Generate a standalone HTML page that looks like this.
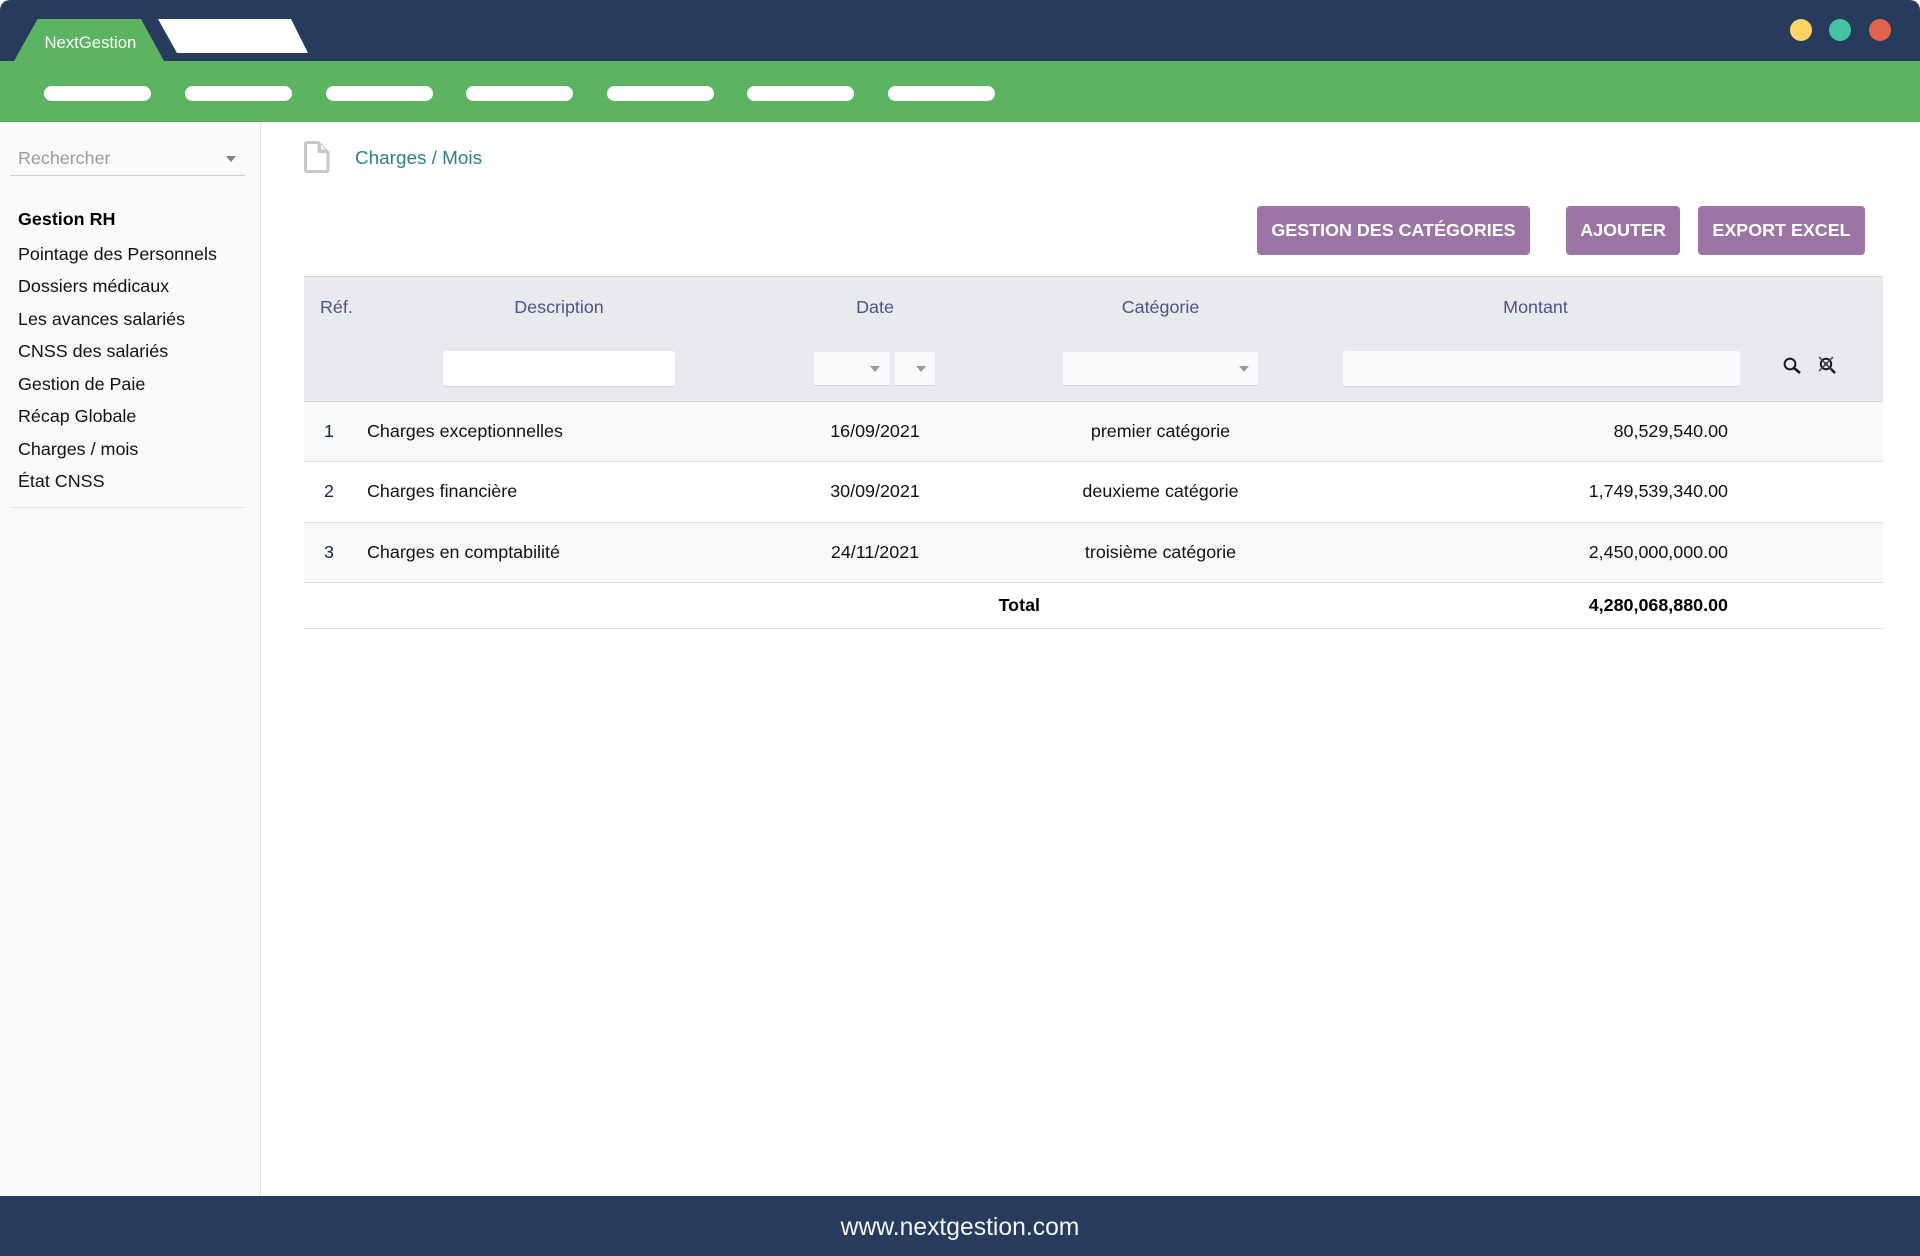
<!DOCTYPE html>
<html lang="fr">
<head>
<meta charset="utf-8">
<title>NextGestion</title>
<style>
html,body{margin:0;padding:0;width:1920px;height:1256px;overflow:hidden;background:#fff;font-family:"Liberation Sans",Arial,sans-serif;}
.a{position:absolute;}
.t{position:absolute;white-space:nowrap;line-height:24px;height:24px;font-size:17.9px;}
.c{transform:translateX(-50%);}
.r{transform:translateX(-100%);}
.pill{position:absolute;top:86px;height:15px;border-radius:8px;background:#fff;width:107px;}
.btn{position:absolute;top:206px;height:49px;line-height:48px;background:#9c75a4;color:#fff;font-weight:bold;font-size:17.9px;text-align:center;border-radius:4px;white-space:nowrap;}
.side{color:#111;}
.th{color:#4b5488;top:295px;}
.rowline{position:absolute;left:304px;width:1579px;height:1px;background:#e0e0e0;}
.row{position:absolute;left:304px;width:1579px;background:#f9f9f9;}
.td{color:#111;}
.n{color:#14225a;}
.sel{position:absolute;top:352px;height:33px;background:#f9f9fb;border-bottom:1px solid #d5d5d8;}
.inp{position:absolute;top:351px;height:35px;border-bottom:1px solid #d5d5d8;border-radius:3px;}
.arr{position:absolute;width:0;height:0;border-left:5px solid transparent;border-right:5px solid transparent;border-top:6px solid #999;}
</style>
</head>
<body>
<!-- header -->
<div class="a" style="left:0;top:0;width:1920px;height:61px;background:#273c5c;border-radius:10px 10px 0 0;"></div>
<div class="a" style="left:0;top:61px;width:1920px;height:61px;background:#5cb361;"></div>
<svg class="a" style="left:0;top:0;" width="320" height="62">
  <polygon points="37.5,19 141,19 164,61 14,61" fill="#5cb361"/>
  <polygon points="158,19 291,19 308,53 177,53" fill="#fff"/>
</svg>
<div class="t" style="left:44.5px;top:31px;color:#fff;font-size:16.7px;">NextGestion</div>
<div class="a" style="left:1790px;top:19px;width:22px;height:22px;border-radius:50%;background:#ffd465;"></div>
<div class="a" style="left:1829px;top:19px;width:22px;height:22px;border-radius:50%;background:#45c4a2;"></div>
<div class="a" style="left:1869px;top:19px;width:22px;height:22px;border-radius:50%;background:#e2644f;"></div>
<div class="pill" style="left:44px;"></div>
<div class="pill" style="left:185px;"></div>
<div class="pill" style="left:326px;"></div>
<div class="pill" style="left:466px;"></div>
<div class="pill" style="left:607px;"></div>
<div class="pill" style="left:747px;"></div>
<div class="pill" style="left:888px;"></div>

<!-- sidebar -->
<div class="a" style="left:0;top:122px;width:260px;height:1074px;background:#fafafa;border-right:1px solid #e2e2e2;"></div>
<div class="t" style="left:18px;top:146px;color:#9a9a9a;">Rechercher</div>
<div class="arr" style="left:226px;top:156px;border-top-color:#808080;"></div>
<div class="a" style="left:10px;top:175px;width:235px;height:1px;background:#cfcfcf;"></div>
<div class="t side" style="left:18px;top:207px;font-weight:bold;color:#000;">Gestion RH</div>
<div class="t side" style="left:18px;top:242px;">Pointage des Personnels</div>
<div class="t side" style="left:18px;top:274px;">Dossiers médicaux</div>
<div class="t side" style="left:18px;top:307px;">Les avances salariés</div>
<div class="t side" style="left:18px;top:339px;">CNSS des salariés</div>
<div class="t side" style="left:18px;top:372px;">Gestion de Paie</div>
<div class="t side" style="left:18px;top:404px;">Récap Globale</div>
<div class="t side" style="left:18px;top:437px;">Charges / mois</div>
<div class="t side" style="left:18px;top:469px;">État CNSS</div>
<div class="a" style="left:10px;top:507px;width:235px;height:1px;background:#e4e4e4;"></div>

<!-- breadcrumb -->
<svg class="a" style="left:303px;top:141px;" width="27" height="33" viewBox="0 0 27 33">
  <path d="M4 1.5 H15 L25 11.5 V28.5 Q25 30.5 23 30.5 H4 Q2.5 30.5 2.5 28.5 V3 Q2.5 1.5 4 1.5 Z" fill="none" stroke="#c8c8c8" stroke-width="3"/>
  <path d="M15 1.5 L25 11.5 H15 Z" fill="#c8c8c8" stroke="#c8c8c8" stroke-width="1"/>
  <path d="M18 4 L18 8.5 L22.5 8.5 Z" fill="#fff"/>
</svg>
<div class="t" style="left:355px;top:147px;color:#2f7e88;font-size:18.9px;">Charges / Mois</div>

<!-- buttons -->
<div class="btn" style="left:1257px;width:273px;">GESTION DES CATÉGORIES</div>
<div class="btn" style="left:1566px;width:114px;">AJOUTER</div>
<div class="btn" style="left:1698px;width:167px;">EXPORT EXCEL</div>

<!-- table -->
<div class="a" style="left:304px;top:276px;width:1579px;height:125px;background:#e9eaee;border-top:1px solid #d8d8d8;box-sizing:border-box;"></div>
<div class="t th" style="left:320px;">Réf.</div>
<div class="t th c" style="left:559px;">Description</div>
<div class="t th c" style="left:875px;">Date</div>
<div class="t th c" style="left:1160.5px;">Catégorie</div>
<div class="t th c" style="left:1535.5px;">Montant</div>

<div class="inp" style="left:443px;width:232px;background:#fff;"></div>
<div class="sel" style="left:814px;width:76px;"></div>
<div class="arr" style="left:870px;top:366px;"></div>
<div class="sel" style="left:895px;width:40px;"></div>
<div class="arr" style="left:916px;top:366px;"></div>
<div class="sel" style="left:1063px;width:195px;"></div>
<div class="arr" style="left:1239px;top:366px;"></div>
<div class="inp" style="left:1343px;width:397px;background:#fafafc;"></div>

<svg class="a" style="left:1775px;top:350px;" width="70" height="30" viewBox="0 0 70 30">
  <circle cx="15" cy="14" r="5.4" fill="none" stroke="#1a1a1a" stroke-width="2"/>
  <path d="M19 18 L25 23" stroke="#1a1a1a" stroke-width="2.6" fill="none"/>
  <circle cx="51" cy="14" r="5.2" fill="none" stroke="#1a1a1a" stroke-width="2"/>
  <circle cx="51" cy="14" r="2" fill="#666"/>
  <path d="M55 18 L60 23" stroke="#1a1a1a" stroke-width="2.6" fill="none"/>
  <path d="M44 7 L57 20 M58 7 L44 21" stroke="#444" stroke-width="1.5" fill="none"/>
</svg>

<div class="rowline" style="top:401px;background:#d2d3d6;"></div>
<div class="row" style="top:402px;height:59px;"></div>
<div class="rowline" style="top:461px;"></div>
<div class="rowline" style="top:522px;"></div>
<div class="row" style="top:523px;height:59px;"></div>
<div class="rowline" style="top:582px;"></div>
<div class="rowline" style="top:628px;"></div>

<div class="t n c" style="left:329px;top:419px;">1</div>
<div class="t td" style="left:367px;top:419px;">Charges exceptionnelles</div>
<div class="t td c" style="left:875px;top:419px;">16/09/2021</div>
<div class="t td c" style="left:1160.5px;top:419px;">premier catégorie</div>
<div class="t td r" style="left:1728px;top:419px;">80,529,540.00</div>

<div class="t n c" style="left:329px;top:479px;">2</div>
<div class="t td" style="left:367px;top:479px;">Charges financière</div>
<div class="t td c" style="left:875px;top:479px;">30/09/2021</div>
<div class="t td c" style="left:1160.5px;top:479px;">deuxieme catégorie</div>
<div class="t td r" style="left:1728px;top:479px;">1,749,539,340.00</div>

<div class="t n c" style="left:329px;top:540px;">3</div>
<div class="t td" style="left:367px;top:540px;">Charges en comptabilité</div>
<div class="t td c" style="left:875px;top:540px;">24/11/2021</div>
<div class="t td c" style="left:1160.5px;top:540px;">troisième catégorie</div>
<div class="t td r" style="left:1728px;top:540px;">2,450,000,000.00</div>

<div class="t r" style="left:1040px;top:593px;font-weight:bold;color:#000;">Total</div>
<div class="t r" style="left:1728px;top:593px;font-weight:bold;color:#000;">4,280,068,880.00</div>

<!-- footer -->
<div class="a" style="left:0;top:1196px;width:1920px;height:60px;background:#273c5c;"></div>
<div class="t c" style="left:960px;top:1216px;color:#f4f4f4;font-size:24.7px;">www.nextgestion.com</div>
</body>
</html>
